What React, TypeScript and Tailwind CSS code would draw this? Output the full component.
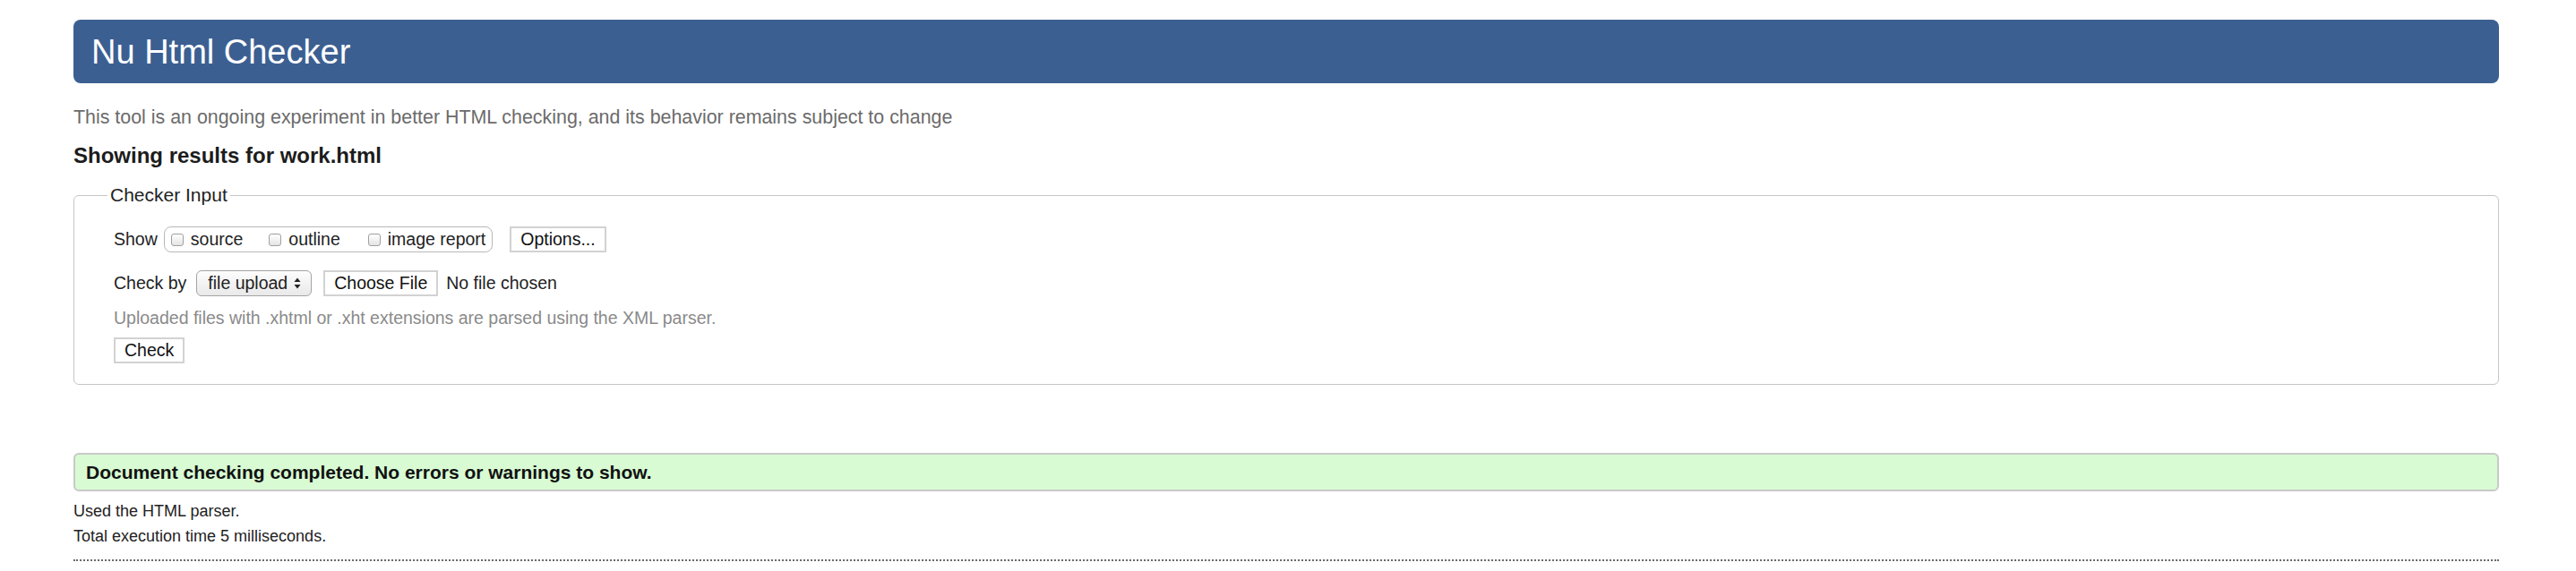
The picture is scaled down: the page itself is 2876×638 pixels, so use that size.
import React from 'react'

const font = { fontFamily: '"Liberation Sans", Arial, Helvetica, sans-serif' }

function Checkbox({ label, className = '' }: { label: string; className?: string }) {
  return (
    <label className={`flex items-center ${className}`}>
      <span className="w-[14px] h-[14px] rounded-[3px] border border-[#9f9f9f] bg-linear-to-b from-[#ffffff] to-[#e4e4e4]" />
      <span className="ml-[8px]">{label}</span>
    </label>
  )
}

function PlainButton({ children, className = '' }: { children: React.ReactNode; className?: string }) {
  return (
    <span
      className={`flex items-center h-[29px] px-[10px] border-2 border-[#d2d2d2] bg-white text-[#111] ${className}`}
    >
      {children}
    </span>
  )
}

export default function App() {
  return (
    <div className="min-h-screen bg-white pt-[22px] pl-[82px] pr-[86px] text-[#222]" style={font}>
      <div className="flex items-center h-[71px] rounded-[8px] bg-[#3c5f92] pl-[20px]">
        <h1 className="text-[38px] leading-[44px] text-white">Nu Html Checker</h1>
      </div>

      <p className="mt-[26px] text-[21.4px] leading-[24px] text-[#6b6b6b]">
        This tool is an ongoing experiment in better HTML checking, and its behavior remains subject to change
      </p>

      <h2 className="mt-[18px] text-[24px] leading-[26px] font-bold text-[#1c1c1c]">Showing results for work.html</h2>

      <fieldset className="mt-[19px] border border-[#c6c6c6] rounded-[6px] pl-[44px] pt-[23px] pb-[23px] text-[19.5px]">
        <legend className="ml-[-7px] px-[3px] text-[21px] leading-[24px] text-[#222]">Checker Input</legend>

        <div className="flex items-center h-[29px]">
          <span>Show</span>
          <div className="ml-[7px] flex items-center h-[29px] border border-[#b8b8b8] rounded-[8px] px-[7px]">
            <Checkbox label="source" />
            <Checkbox label="outline" className="ml-[29px]" />
            <Checkbox label="image report" className="ml-[31px]" />
          </div>
          <PlainButton className="ml-[19px]">Options...</PlainButton>
        </div>

        <div className="flex items-center h-[29px] mt-[20px]">
          <span>Check by</span>
          <div className="ml-[11px] flex items-center h-[29px] rounded-[6px] border border-[#a4a4a4] bg-linear-to-b from-[#fdfdfd] to-[#e9e9e9] pl-[12px] pr-[11px]">
            <span>file upload</span>
            <svg className="ml-[7px]" width="8" height="13" viewBox="0 0 8 13">
              <path d="M4 0.5 L7.5 5 H0.5 Z" fill="#222" />
              <path d="M4 12.5 L7.5 8 H0.5 Z" fill="#222" />
            </svg>
          </div>
          <PlainButton className="ml-[13px]">Choose File</PlainButton>
          <span className="ml-[9px]">No file chosen</span>
        </div>

        <p className="mt-[14px] text-[19.5px] leading-[21px] text-[#8a8a8a]">
          Uploaded files with .xhtml or .xht extensions are parsed using the XML parser.
        </p>

        <div className="flex mt-[11px]">
          <PlainButton>Check</PlainButton>
        </div>
      </fieldset>

      <div className="mt-[76px] flex items-center h-[43px] border-2 border-[#c9c9c9] rounded-[6px] bg-[#d8fbd3] pl-[12px]">
        <span className="text-[21px] leading-[24px] font-bold text-[#111]">
          Document checking completed. No errors or warnings to show.
        </span>
      </div>

      <div className="mt-[8px] text-[18px] leading-[28px] text-[#222]">
        <p>Used the HTML parser.</p>
        <p>Total execution time 5 milliseconds.</p>
      </div>

      <div className="mt-[12px] border-t-2 border-dotted border-[#6a6a6a]" />
    </div>
  )
}
